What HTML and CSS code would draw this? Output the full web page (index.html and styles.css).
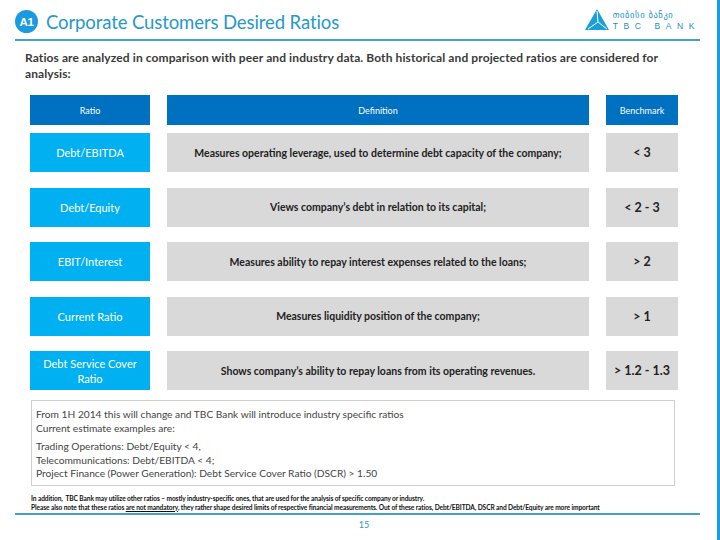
FILE: index.html
```html
<!DOCTYPE html>
<html>
<head>
<meta charset="utf-8">
<link rel="stylesheet" href="styles.css">
</head>
<body>
<div class="slide">
  <header class="topbar">
    <div class="title-wrap">
      <span class="badge">A1</span>
      <h1 class="title">Corporate Customers Desired Ratios</h1>
    </div>
    <div class="logo">
      <svg class="logo-mark" width="24" height="21" viewBox="0 0 24 21">
        <polygon points="12,0 24,21 0,21" fill="#1a9fdc"/>
        <polyline points="12,2 13,13 3,20" fill="none" stroke="#fff" stroke-width="1"/>
        <polyline points="13,13 22,20" fill="none" stroke="#fff" stroke-width="1"/>
      </svg>
      <div class="logo-text">
        <span class="logo-geo">თიბისი ბანკი</span>
        <span class="logo-en">TBC BANK</span>
      </div>
    </div>
  </header>

  <p class="intro">Ratios are analyzed in comparison with peer and industry data. Both historical and projected ratios are considered for analysis:</p>

  <div class="table">
    <div class="row head">
      <div class="cell">Ratio</div>
      <div class="cell">Definition</div>
      <div class="cell">Benchmark</div>
    </div>
    <div class="rows">
      <div class="row">
        <div class="cell name">Debt/EBITDA</div>
        <div class="cell def">Measures operating leverage, used to determine debt capacity of the company;</div>
        <div class="cell bench">&lt; 3</div>
      </div>
      <div class="row">
        <div class="cell name">Debt/Equity</div>
        <div class="cell def">Views company’s debt in relation to its capital;</div>
        <div class="cell bench">&lt; 2 - 3</div>
      </div>
      <div class="row">
        <div class="cell name">EBIT/Interest</div>
        <div class="cell def">Measures ability to repay interest expenses related to the loans;</div>
        <div class="cell bench">&gt; 2</div>
      </div>
      <div class="row">
        <div class="cell name">Current Ratio</div>
        <div class="cell def">Measures liquidity position of the company;</div>
        <div class="cell bench">&gt; 1</div>
      </div>
      <div class="row">
        <div class="cell name">Debt Service Cover<br>Ratio</div>
        <div class="cell def">Shows company’s ability to repay loans from its operating revenues.</div>
        <div class="cell bench">&gt; 1.2 - 1.3</div>
      </div>
    </div>
  </div>

  <div class="note">
    <p>From 1H 2014 this will change and TBC Bank will introduce industry specific ratios<br>Current estimate examples are:</p>
    <p>Trading Operations: Debt/Equity &lt; 4,<br>Telecommunications: Debt/EBITDA &lt; 4;<br>Project Finance (Power Generation): Debt Service Cover Ratio (DSCR) &gt; 1.50</p>
  </div>

  <div class="footnote">
    <p>In addition,&nbsp; TBC Bank may utilize other ratios – mostly industry-specific ones, that are used for the analysis of specific company or industry.</p>
    <p>Please also note that these ratios <u>are not mandatory</u>, they rather shape desired limits of respective financial measurements. Out of these ratios, Debt/EBITDA, DSCR and Debt/Equity are more important</p>
  </div>

  <footer class="bottom">
    <span class="page">15</span>
  </footer>
</div>
</body>
</html>
```
FILE: styles.css
```css
* { box-sizing: border-box; }
html, body { margin: 0; padding: 0; background: #fff; }
body { font-family: Lato, "Liberation Sans", sans-serif; }

.slide {
  width: 720px;
  height: 540px;
  border-right: 3px solid #1a9de0;
  display: flex;
  flex-direction: column;
  overflow: hidden;
}

.topbar {
  margin: 0 17px 0 15px;
  height: 41px;
  border-bottom: 2px solid #45a2c6;
  display: flex;
  justify-content: space-between;
  align-items: flex-start;
}
.title-wrap {
  display: flex;
  align-items: center;
  padding-top: 10px;
}
.badge {
  width: 23px;
  height: 23px;
  border-radius: 50%;
  background: #1a9be0;
  color: #fff;
  font-family: "Liberation Sans", sans-serif;
  font-weight: bold;
  font-size: 11.5px;
  display: flex;
  align-items: center;
  justify-content: center;
  letter-spacing: -0.3px;
}
.title {
  margin: 0 0 0 8px;
  font-weight: normal;
  font-size: 18.5px;
  color: #2699c9;
  letter-spacing: -0.1px;
}

.logo {
  display: flex;
  align-items: flex-end;
  padding-top: 9px;
  gap: 4px;
}
.logo-mark { display: block; margin-bottom: 1px; }
.logo-text {
  display: flex;
  flex-direction: column;
  line-height: 10px;
  color: #1c8fc8;
}
.logo-geo {
  font-family: "DejaVu Sans", sans-serif;
  font-size: 8.5px;
  letter-spacing: 0.6px;
}
.logo-en {
  font-family: "Liberation Sans", sans-serif;
  font-size: 8.5px;
  letter-spacing: 5.6px;
  margin-top: 1px;
}

.intro {
  width: 660px;
  margin: 9px 0 0 25px;
  font-size: 12px;
  font-weight: bold;
  line-height: 16px;
  color: #3a3a3a;
  letter-spacing: 0.1px;
}

.table {
  margin: 13px 0 0 30px;
  display: flex;
  flex-direction: column;
}
.row {
  display: grid;
  grid-template-columns: 120px 422px 72px;
  column-gap: 17px;
  height: 39px;
}
.rows {
  display: flex;
  flex-direction: column;
  gap: 15.5px;
}
.cell {
  display: flex;
  align-items: center;
  justify-content: center;
  text-align: center;
}
.head {
  height: 30px;
  margin-bottom: 8px;
}
.head .cell {
  background: #0070c0;
  color: #fff;
  font-size: 9px;
}
.name {
  background: #00b0f0;
  color: #fff;
  font-size: 11px;
  line-height: 15px;
}
.def {
  background: #d9d9d9;
  color: #222;
  font-size: 10.5px;
  font-weight: bold;
}
.bench {
  background: #d9d9d9;
  color: #222;
  font-size: 12.5px;
  font-weight: bold;
}

.note {
  margin: 10px 42px 0 31px;
  height: 86px;
  border: 1px solid #cfcfcf;
  padding: 7px 4px 0 4px;
  font-size: 10.2px;
  line-height: 13.5px;
  color: #444;
}
.note p { margin: 0 0 5px 0; }

.footnote {
  margin: 8px 0 0 31px;
  font-size: 6.6px;
  line-height: 8.5px;
  font-weight: bold;
  color: #111;
  letter-spacing: -0.1px;
}
.footnote p { margin: 0; white-space: nowrap; }

.bottom {
  margin: 2px 17px 0 15px;
  border-top: 2px solid #45a2c6;
  display: flex;
  justify-content: center;
  padding-top: 4px;
}
.page {
  font-size: 9px;
  color: #2699c9;
  margin-left: 13px;
}
```
